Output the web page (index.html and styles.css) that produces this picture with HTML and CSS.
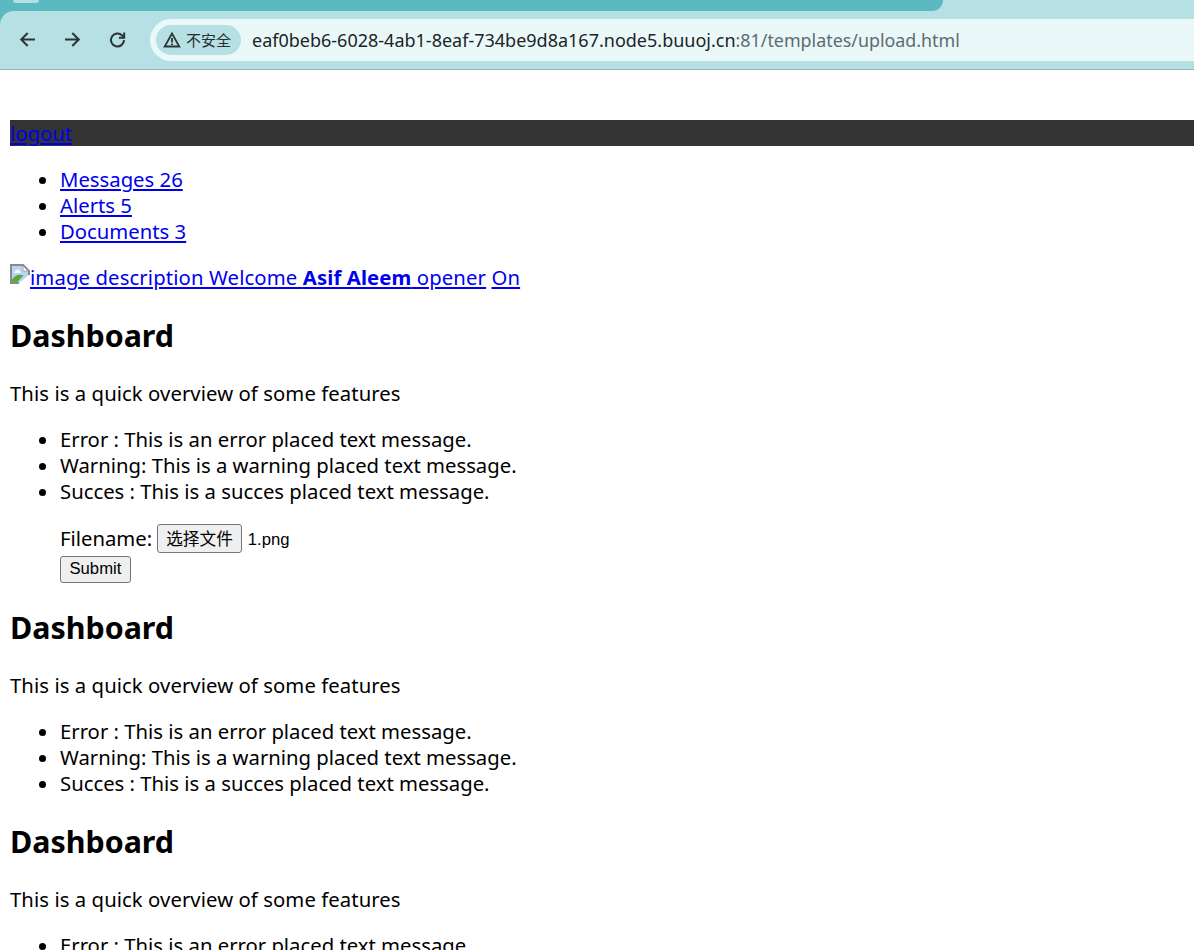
FILE: index.html
```html
<!DOCTYPE html>
<html lang="en">
<head>
<meta charset="utf-8">
<title>upload</title>
<link rel="stylesheet" href="styles.css">
</head>
<body>
<header class="chrome">
  <div class="tabstrip"><div class="active-tab"><span class="tab-stub"></span></div></div>
  <div class="toolbar">
    <svg class="nav-icon" viewBox="0 0 20 20"><path d="M17 9.500H3.500M9.700 3 3.200 9.500 9.700 16"/></svg>
    <svg class="nav-icon" viewBox="0 0 20 20"><path d="M2 9.500h13.500M9.300 3l6.500 6.500-6.500 6.500"/></svg>
    <svg class="nav-icon" viewBox="0 0 20 20"><path d="M16 10a6.500 6.500 0 1 1-2-4.700L16 7M16.200 2.500v5.300h-5.300"/></svg>
    <div class="omnibox">
      <span class="security"><svg class="warn" viewBox="0 0 18 18"><path d="M9 2.500 1.700 15.500h14.600zM9 7v4.500M9 12.600v1.400"/></svg>不安全</span>
      <span class="url">eaf0beb6-6028-4ab1-8eaf-734be9d8a167.node5.buuoj.cn<span class="url-dim">:81/templates/upload.html</span></span>
    </div>
  </div>
</header>
<main class="page">
  <div class="topbar"><a href="#">logout</a></div>
  <ul class="nav-list">
    <li><a href="#">Messages 26</a></li>
    <li><a href="#">Alerts 5</a></li>
    <li><a href="#">Documents 3</a></li>
  </ul>
  <p class="welcome"><a href="#"><svg class="broken" viewBox="0 0 20 20"><path class="b-sky" d="M1 1h12l6 6v4l-10 8H1z"/><path class="b-cloud" d="M5 7c1-2 4-2 5 0l1 2H4z"/><path class="b-hill" d="M2 18v-2.500C5 11 9 9.500 13.500 11.500L7.500 18z"/><path class="b-frame" d="M19 11V7l-6-6H1v18h8"/><path class="b-fold" d="M13 2v5h5z"/></svg>image description Welcome <strong>Asif Aleem</strong> opener</a> <a href="#">On</a></p>
  <h2>Dashboard</h2>
  <p class="intro">This is a quick overview of some features</p>
  <ul>
    <li>Error : This is an error placed text message.</li>
    <li>Warning: This is a warning placed text message.</li>
    <li>Succes : This is a succes placed text message.</li>
  </ul>
  <form class="upload">
    <div class="file-row"><label>Filename:</label><button type="button" class="btn btn-file">选择文件</button><span class="file-name">1.png</span></div>
    <div class="submit-row"><button type="button" class="btn btn-submit">Submit</button></div>
  </form>
  <h2>Dashboard</h2>
  <p class="intro">This is a quick overview of some features</p>
  <ul>
    <li>Error : This is an error placed text message.</li>
    <li>Warning: This is a warning placed text message.</li>
    <li>Succes : This is a succes placed text message.</li>
  </ul>
  <h2>Dashboard</h2>
  <p class="intro">This is a quick overview of some features</p>
  <ul>
    <li>Error : This is an error placed text message.</li>
    <li>Warning: This is a warning placed text message.</li>
    <li>Succes : This is a succes placed text message.</li>
  </ul>
</main>
</body>
</html>
```

FILE: styles.css
```css
html, body { margin: 0; height: 950px; overflow: hidden; background: #fff; }
body { font-family: "Noto Sans", "Noto Sans CJK SC", sans-serif; font-size: 20.3px; line-height: 26px; color: #000; }
a { color: #0000ee; }

.chrome { height: 70px; background: linear-gradient(#5bb9c2, #5bb9c2) no-repeat 0 0 / 30px 30px, #b6e0e4; border-bottom: 1px solid #96b4ba; box-sizing: border-box; }
.tabstrip { height: 11px; }
.active-tab { width: 943px; height: 11px; background: #5bb9c2; border-bottom-right-radius: 14px; }
.tab-stub { display: block; width: 26px; height: 3px; margin-left: 13px; background: #b3e0e3; border-radius: 0 0 10px 10px; }
.toolbar { height: 58px; background: #b6e0e4; border-top-left-radius: 14px; display: flex; align-items: center; padding-left: 18px; gap: 25px; }
.nav-icon { width: 20px; height: 20px; flex: none; fill: none; stroke: #2b3436; stroke-width: 2; }
.omnibox { flex: 1; height: 42px; margin-left: -3px; background: #eaf8f9; border-radius: 21px 0 0 21px; display: flex; align-items: center; padding-left: 6px; gap: 11px; }
.security { height: 30px; width: 85px; box-sizing: border-box; padding-left: 7px; background: #b6e0e4; border-radius: 15px; display: flex; align-items: center; gap: 5px; font-size: 15px; color: #262e30; font-family: "Noto Sans CJK SC", sans-serif; }
.warn { width: 18px; height: 18px; fill: none; stroke: #2b3436; stroke-width: 1.8; }
.url { font-size: 18px; color: #1c2426; white-space: nowrap; }
.url-dim { color: #5f6b6e; font-size: 17.85px; }

.page { padding: 50px 0 0 10px; }
.topbar { background: #333; height: 26px; }
ul { margin: 20px 0; padding-left: 50px; }
.nav-list { margin-top: 21px; }
li, p { line-height: 24px; padding-bottom: 2px; }
p { margin: 20px 0; }
.welcome { letter-spacing: 0.12px; }
.intro { letter-spacing: 0.07px; }
h2 { font-size: 30.4px; line-height: 40px; margin: 25px 0; font-weight: 700; }
.broken { width: 20px; height: 20px; vertical-align: top; margin-top: -1px; }
.b-sky { fill: #bcd3f2; }
.b-cloud { fill: #f4f8fd; }
.b-hill { fill: #5aa93c; }
.b-frame { fill: none; stroke: #8a8a8a; stroke-width: 2; }
.b-fold { fill: #fff; stroke: #a8a8a8; }

.upload { margin: 0 0 0 50px; }
.file-row { display: flex; align-items: center; height: 29px; margin-top: -1px; }
.file-row label { margin: 0 5px 2px 0; }
.submit-row { display: flex; margin-top: 3px; }
.btn { font-family: "Liberation Sans", "Noto Sans CJK SC", sans-serif; font-size: 16.67px; line-height: 18px; color: #000; background: #efefef; border: 1px solid #767676; border-radius: 3px; }
.btn-file { height: 29px; padding: 4px 8px 2px; }
.btn-submit { height: 27px; padding: 2px 8.5px 4px; }
.file-name { font-family: "Liberation Sans", sans-serif; font-size: 16.67px; margin: 2px 0 0 6px; }
```
